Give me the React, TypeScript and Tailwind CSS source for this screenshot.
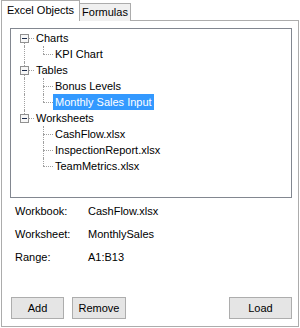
import React from 'react';

type Node = {
  label: string;
  level: number;
  expanded?: boolean;
  selected?: boolean;
  // which vertical guides pass through this row
  guides: number[];
  top: boolean;
  bottom: boolean;
};

const rows: Node[] = [
  { label: 'Charts', level: 0, expanded: true, guides: [], top: false, bottom: true },
  { label: 'KPI Chart', level: 1, guides: [0], top: true, bottom: false },
  { label: 'Tables', level: 0, expanded: true, guides: [], top: true, bottom: true },
  { label: 'Bonus Levels', level: 1, guides: [0], top: true, bottom: true },
  { label: 'Monthly Sales Input', level: 1, selected: true, guides: [0], top: true, bottom: false },
  { label: 'Worksheets', level: 0, expanded: true, guides: [], top: true, bottom: false },
  { label: 'CashFlow.xlsx', level: 1, guides: [], top: true, bottom: true },
  { label: 'InspectionReport.xlsx', level: 1, guides: [], top: true, bottom: true },
  { label: 'TeamMetrics.xlsx', level: 1, guides: [], top: true, bottom: false },
];

const lineX = (level: number) => 13 + level * 19;

const TreeRow = ({ node }: { node: Node }) => {
  const x = lineX(node.level);
  return (
    <div className="relative h-[16px] flex items-center">
      {node.guides.map((g) => (
        <span
          key={g}
          className="absolute top-0 h-[16px] border-l border-dotted border-[#a0a0a0]"
          style={{ left: lineX(g) }}
        />
      ))}
      {node.top && (
        <span className="absolute top-0 h-[8px] border-l border-dotted border-[#a0a0a0]" style={{ left: x }} />
      )}
      {node.bottom && (
        <span className="absolute top-[8px] h-[8px] border-l border-dotted border-[#a0a0a0]" style={{ left: x }} />
      )}
      <span className="absolute top-[8px] w-[10px] border-t border-dotted border-[#a0a0a0]" style={{ left: x }} />
      {node.expanded && (
        <span
          className="absolute top-[4px] w-[9px] h-[9px] border border-[#919191] bg-[#f7f7f7] flex items-center justify-center"
          style={{ left: x - 4 }}
        >
          <span className="w-[5px] h-[1px] bg-[#1b2a4a]" />
        </span>
      )}
      <span
        className={
          'h-[16px] leading-[16px] px-[2px] whitespace-nowrap ' +
          (node.selected ? 'bg-[#3399ff] text-white' : 'text-black')
        }
        style={{ marginLeft: 23 + node.level * 19 }}
      >
        {node.label}
      </span>
    </div>
  );
};

const Button = ({ label, className }: { label: string; className: string }) => (
  <div
    className={
      'h-[22px] border border-[#adadad] bg-[#e5e5e5] flex items-center justify-center text-black ' + className
    }
  >
    {label}
  </div>
);

export default function App() {
  return (
    <div className="w-[300px] h-[328px] bg-white font-['Liberation_Sans',Arial,sans-serif] text-[11px] text-black">
      <div className="flex items-end h-[21px] pl-[1px]">
        <div className="relative z-10 h-[21px] w-[79px] border border-b-0 border-[#acacac] bg-white flex items-center justify-center pb-[1px]">
          Excel Objects
        </div>
        <div className="h-[18px] w-[51px] border border-l-0 border-b-0 border-[#acacac] bg-[#f0f0f0] flex items-center justify-center">
          Formulas
        </div>
      </div>
      <div className="-mt-[1px] ml-[1px] w-[298px] h-[307px] border border-[#acacac] bg-white flex flex-col">
        <div className="mt-[7px] ml-[8px] w-[282px] h-[170px] border border-[#828790] bg-white pt-[1px]">
          {rows.map((r) => (
            <TreeRow key={r.label} node={r} />
          ))}
        </div>
        <div className="mt-[2px] ml-[13px] flex flex-col">
          {[
            ['Workbook:', 'CashFlow.xlsx'],
            ['Worksheet:', 'MonthlySales'],
            ['Range:', 'A1:B13'],
          ].map(([k, v]) => (
            <div key={k} className="h-[23px] flex items-center">
              <span className="w-[73px]">{k}</span>
              <span>{v}</span>
            </div>
          ))}
        </div>
        <div className="mt-auto mb-[7px] ml-[9px] mr-[6px] flex">
          <Button label="Add" className="w-[53px]" />
          <Button label="Remove" className="w-[54px] ml-[8px]" />
          <Button label="Load" className="w-[63px] ml-auto" />
        </div>
      </div>
    </div>
  );
}
